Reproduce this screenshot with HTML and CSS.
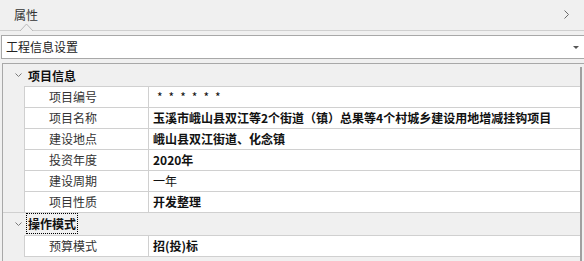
FILE: index.html
```html
<!DOCTYPE html>
<html>
	<head>
		<meta charset="utf-8">
		<link rel="stylesheet" href="styles.css">
	</head>
	<body>
		<div id="panel">
			<div class="header">
				<span class="title">属性</span>
				<svg class="tick" width="14" height="8" viewBox="0 0 14 8"><polyline points="0,8 6.5,1 13,8" fill="#f0f0f0" stroke="#b8b8b8" stroke-width="1"/></svg>
				<svg class="more" width="6" height="10" viewBox="0 0 6 10"><polyline points="0.5,0.5 4.5,4.5 0.5,8.5" fill="none" stroke="#6a6a6a" stroke-width="1"/></svg>
			</div>

			<div class="combo">
				<span>工程信息设置</span>
				<svg class="drop" width="6" height="3" viewBox="0 0 6 3"><polygon points="0,0 6,0 3,3" fill="#555"/></svg>
			</div>

			<div class="grid">
				<div class="grid-body">
					<div class="cat">
						<svg class="chev" width="7" height="5" viewBox="0 0 7 5"><polyline points="0.5,0.5 3.5,3.5 6.5,0.5" fill="none" stroke="#7a7a7a" stroke-width="1"/></svg>
						<span>项目信息</span>
					</div>
					<div class="row"><div class="name">项目编号</div><div class="value stars">******</div></div>
					<div class="row"><div class="name">项目名称</div><div class="value bold">玉溪市峨山县双江等2个街道（镇）总果等4个村城乡建设用地增减挂钩项目</div></div>
					<div class="row"><div class="name">建设地点</div><div class="value bold">峨山县双江街道、化念镇</div></div>
					<div class="row"><div class="name">投资年度</div><div class="value bold">2020年</div></div>
					<div class="row"><div class="name">建设周期</div><div class="value">一年</div></div>
					<div class="row"><div class="name">项目性质</div><div class="value bold">开发整理</div></div>
					<div class="cat next">
						<svg class="chev" width="7" height="5" viewBox="0 0 7 5"><polyline points="0.5,0.5 3.5,3.5 6.5,0.5" fill="none" stroke="#7a7a7a" stroke-width="1"/></svg>
						<span class="focus">操作模式</span>
					</div>
					<div class="row last"><div class="name">预算模式</div><div class="value bold">招(投)标</div></div>
				</div>
				<div class="scroll"></div>
			</div>
		</div>
	</body>
</html>
```

FILE: styles.css
```css
html, body {
	margin: 0;
	padding: 0;
	background: #f0f0f0;
}

#panel {
	font-family: "Noto Sans CJK SC", "Noto Sans", sans-serif;
	font-size: 12px;
	color: #222;
	width: 584px;
	height: 261px;
	display: flex;
	flex-direction: column;
	overflow: hidden;
}

.header {
	position: relative;
	height: 30px;
	border-bottom: 1px solid #cfcfcf;
	display: flex;
	align-items: center;
	padding-left: 14px;
}

.title {
	color: #333;
	line-height: 16px;
	margin-top: -1px;
}

.tick {
	position: absolute;
	left: 20px;
	bottom: -1px;
}

.more {
	margin-left: auto;
	margin-right: 14px;
}

.combo {
	margin: 4px 0 0 1px;
	height: 22px;
	background: #fff;
	border: 1px solid #a8a8a8;
	border-right: none;
	display: flex;
	align-items: center;
	padding-left: 4px;
}

.combo span {
	line-height: 16px;
}

.drop {
	margin-left: auto;
	margin-right: 5px;
}

.grid {
	flex: 1;
	margin: 4px 0 0 2px;
	border-top: 1px solid #a8a8a8;
	border-left: 1px solid #a8a8a8;
	display: flex;
}

.grid-body {
	flex: 1;
	background: #f0f0f0;
}

.scroll {
	width: 2px;
	margin-top: 3px;
	margin-right: 2px;
	background: #a0a0a0;
}

.cat {
	height: 22px;
	display: flex;
	align-items: center;
	padding-left: 12px;
	font-weight: bold;
	color: #111;
}

.cat.next {
	border-top: 1px solid #d0d0d0;
}

.chev {
	margin-right: 6px;
}

.focus {
	align-self: flex-start;
	line-height: 19px;
	border: 1px dotted #000;
	padding: 0 1px;
	margin-left: -2px;
}

.row {
	margin-left: 21px;
	height: 20px;
	display: flex;
	background: #fff;
	border-top: 1px solid #d0d0d0;
	border-left: 1px solid #d0d0d0;
}

.row.last {
	border-bottom: 1px solid #d0d0d0;
}

.name {
	width: 99px;
	padding-left: 24px;
	border-right: 1px solid #d0d0d0;
	line-height: 20px;
	color: #333;
}

.value {
	flex: 1;
	padding-left: 4px;
	line-height: 20px;
	color: #111;
	white-space: nowrap;
}

.bold {
	font-weight: bold;
}

.stars {
	letter-spacing: 6px;
	padding-left: 8px;
}
```
